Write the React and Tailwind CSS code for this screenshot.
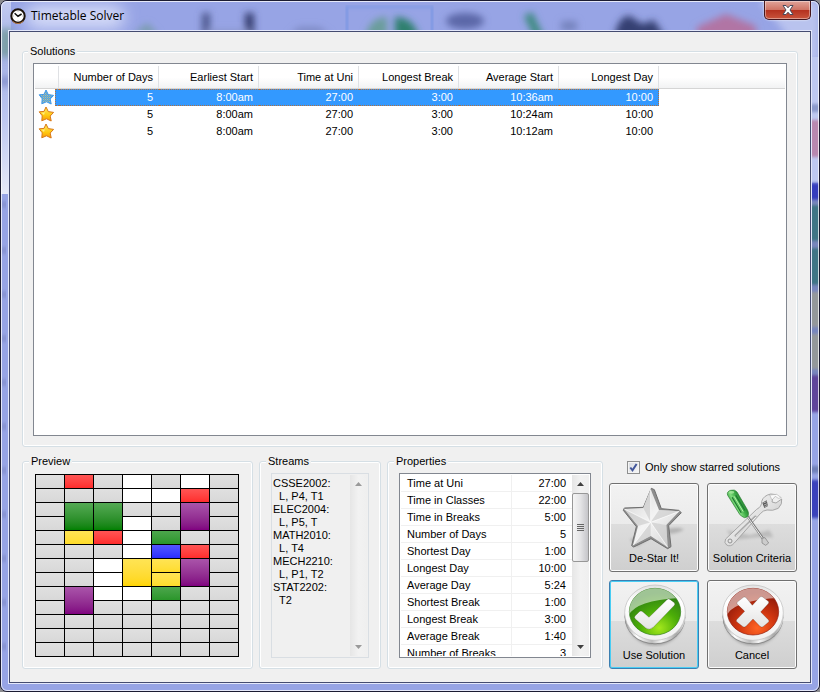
import React, { useState } from "react";

const solutionColumns = ["Number of Days", "Earliest Start", "Time at Uni", "Longest Break", "Average Start", "Longest Day"];

const solutions = [
  ["5", "8:00am", "27:00", "3:00", "10:36am", "10:00"],
  ["5", "8:00am", "27:00", "3:00", "10:24am", "10:00"],
  ["5", "8:00am", "27:00", "3:00", "10:12am", "10:00"],
];

const properties = [
  ["Time at Uni", "27:00"],
  ["Time in Classes", "22:00"],
  ["Time in Breaks", "5:00"],
  ["Number of Days", "5"],
  ["Shortest Day", "1:00"],
  ["Longest Day", "10:00"],
  ["Average Day", "5:24"],
  ["Shortest Break", "1:00"],
  ["Longest Break", "3:00"],
  ["Average Break", "1:40"],
  ["Number of Breaks", "3"],
];

const streams = `CSSE2002:
  L, P4, T1
ELEC2004:
  L, P5, T
MATH2010:
  L, T4
MECH2210:
  L, P1, T2
STAT2202:
  T2`;

/* One string per half-hour slot; lower case = one slot, upper case = two slots, "^" = covered from above. */
const timetable = [
  ".r.w.w.",
  "...wwr.",
  ".GG..P.",
  ".^^w.^.",
  ".yrwg..",
  "...wbr.",
  "..wYyP.",
  "..w^y^.",
  ".Pwwg..",
  ".^.....",
  ".......",
  ".......",
  ".......",
];

const cellStyles = {
  ".": "bg-linear-to-b from-[#e0e0e0] to-[#d8d8d8]",
  w: "bg-white",
  r: "bg-linear-to-b from-[#ff5454] to-[#ff2c2c]",
  g: "bg-linear-to-b from-[#4ca64c] to-[#2a962a]",
  y: "bg-linear-to-b from-[#ffe454] to-[#ffdc2a]",
  b: "bg-linear-to-b from-[#5454ff] to-[#2c2cff]",
  G: "row-span-2 bg-linear-to-b from-[#54aa54] to-[#008000]",
  Y: "row-span-2 bg-linear-to-b from-[#ffe454] to-[#ffd600]",
  P: "row-span-2 bg-linear-to-b from-[#aa54aa] to-[#800080]",
};

function Group({ title, className = "px-[11px]", children }) {
  return (
    <fieldset className={`flex min-w-0 flex-col rounded-[3px] border border-[#d5dfe5] pb-2.5 pt-[5px] shadow-[inset_0_0_0_1px_#fff] ${className}`}>
      <legend className="-ml-[5px] bg-[#f0f0f0] px-0.5 leading-[14px]">{title}</legend>
      {children}
    </fieldset>
  );
}

function GoldStar({ selected }) {
  return (
    <svg className="block h-4 w-5" viewBox="0 0 20 16">
      <defs>
        <linearGradient id="gold" x1="0" y1="0" x2="0" y2="1">
          <stop offset="0" stopColor="#ffe860" />
          <stop offset=".6" stopColor="#ffc810" />
          <stop offset="1" stopColor="#f89808" />
        </linearGradient>
        <pattern id="dither" width="2" height="2" patternUnits="userSpaceOnUse">
          <rect width="2" height="2" fill="#4aa2ec" />
          <rect width="1" height="1" fill="#c4c088" />
          <rect x="1" y="1" width="1" height="1" fill="#88b4b4" />
        </pattern>
      </defs>
      <path
        d="M11 1 L13.3 5.6 L18.6 6.4 L15.2 10 L16.2 15 L11.5 12.8 L6.8 14.8 L7.2 9.8 L4.2 5.8 L9 5.4 Z"
        fill={selected ? "url(#dither)" : "url(#gold)"}
        stroke={selected ? "#3f98ea" : "#d87818"}
        strokeWidth="1"
        strokeLinejoin="round"
      />
      {!selected && <path d="M10.8 3.5 L9.6 6.6 L6.5 6.8 L9 9 Z" fill="#fff6a0" opacity=".8" />}
    </svg>
  );
}

function ClockIcon() {
  return (
    <svg className="h-4 w-4 shrink-0" viewBox="0 0 16 16">
      <circle cx="8" cy="8" r="6.7" fill="#fff" stroke="#1c130c" strokeWidth="2" />
      <path d="M2.6 13.2 A7.4 7.4 0 0 0 13.4 13.2" fill="none" stroke="#b8783c" strokeWidth="1" />
      <path d="M4.6 5.2 L8 8.2 L11.6 6" fill="none" stroke="#111" strokeWidth="1.5" />
      <path d="M8 2.7v.8M8 12.5v.8M2.8 8h.8M12.4 8h.8" stroke="#777" strokeWidth=".8" />
    </svg>
  );
}

/* Blurred desktop seen through the translucent window frame. */
function GlassBackdrop() {
  return (
    <svg className="pointer-events-none absolute inset-0 h-full w-full" aria-hidden="true">
      <defs>
        <filter id="soft" x="-30%" y="-30%" width="160%" height="160%">
          <feGaussianBlur stdDeviation="3.5" />
        </filter>
        <filter id="softer" x="-30%" y="-80%" width="160%" height="260%">
          <feGaussianBlur stdDeviation="8" />
        </filter>
        <filter id="edge" x="-50%" y="-5%" width="200%" height="110%">
          <feGaussianBlur stdDeviation="0 1.5" />
        </filter>
        <linearGradient id="leftTop" x1="0" y1="0" x2="0" y2="1">
          <stop offset="0" stopColor="#c4ccf2" />
          <stop offset=".25" stopColor="#a4b0e4" />
          <stop offset=".6" stopColor="#bcc6ef" />
          <stop offset="1" stopColor="#e6e9f8" />
        </linearGradient>
      </defs>
      <rect width="100%" height="100%" fill="#97a4e5" />
      <rect width="10" height="193" fill="url(#leftTop)" />
      <g filter="url(#soft)">
        <rect x="-2" y="28" width="14" height="28" fill="#7d9fa8" />
        <rect x="-2" y="76" width="12" height="9" fill="#8490cc" />
        <path d="M132 34 l14 -12 l12 12z" fill="#7a9cae" />
        <rect x="201" y="12" width="8" height="24" fill="#4e588e" />
        <rect x="244" y="12" width="9" height="24" fill="#343e70" />
        <rect x="205" y="29" width="44" height="10" fill="#8994cb" />
        <path d="M288 34 l10 -8 h20 l12 8z" fill="#7e8ac4" />
        <path d="M364 38 q4 -22 22 -22 v22z" fill="#6a9d9b" />
        <path d="M394 38 v-22 q20 0 24 22z" fill="#2f806e" />
        <ellipse cx="464" cy="20" rx="19" ry="8" fill="#5c68a8" />
        <path d="M527 13 L539 38" stroke="#3c8a80" strokeWidth="9" />
        <rect x="560" y="20" width="16" height="10" fill="#7683be" />
        <path d="M613 38 q4 -24 16 -23 l12 8 l12 -4 l12 19z" fill="#343f72" />
        <path d="M696 38 v-12 l29 -13 l30 12 v13z" fill="#b174a4" />
      </g>
      <rect x="346" y="6" width="85" height="40" fill="none" stroke="#7896e4" strokeWidth="3" opacity=".6" filter="url(#edge)" />
      <rect x="24" y="4" width="100" height="24" rx="12" fill="#e0e5fb" opacity=".85" filter="url(#softer)" />
      <g filter="url(#edge)">
        {[200, 246, 290, 334, 378, 422, 466, 510, 554, 598, 642].map((y) => (
          <rect key={y} x="1" y={y} width="4" height="7" fill="#8995d4" />
        ))}
      </g>
      <svg x="100%" overflow="visible">
        <path d="M-60 0 H0 V60 H-10 Z" fill="#c2cbf1" opacity=".8" filter="url(#soft)" />
        <rect x="-10" y="56" width="10" height="126" fill="#bec8f0" />
        <g filter="url(#edge)">
          <rect x="-10" y="103" width="10" height="8" fill="#8c9acb" />
          <rect x="-10" y="119" width="10" height="37" fill="#b888b0" />
          <rect x="-10" y="182" width="10" height="17" fill="#343dbd" />
          <rect x="-10" y="199" width="10" height="180" fill="#7886bd" />
          <rect x="-10" y="204" width="10" height="36" fill="#3f7586" />
          <rect x="-10" y="247" width="10" height="37" fill="#3f7586" />
          <rect x="-10" y="291" width="10" height="35" fill="#94989b" />
          <rect x="-10" y="333" width="10" height="35" fill="#94989b" />
          <rect x="-10" y="374" width="10" height="37" fill="#5e449b" />
          <rect x="-10" y="465" width="10" height="7" fill="#7080b8" />
          <rect x="-10" y="479" width="10" height="38" fill="#3b43bc" />
        </g>
      </svg>
    </svg>
  );
}

function SilverStarIcon() {
  return (
    <svg className="h-[65px] w-20" viewBox="42 105 240 195">
      <defs>
        <linearGradient id="silver" x1="0" y1="0" x2="1" y2="1">
          <stop offset="0" stopColor="#d2d2d2" />
          <stop offset=".5" stopColor="#f4f4f4" />
          <stop offset="1" stopColor="#cfcfcf" />
        </linearGradient>
        <filter id="iconShadow" x="-20%" y="-60%" width="140%" height="220%">
          <feGaussianBlur stdDeviation="4" />
        </filter>
      </defs>
      <path d="M190 240 Q235 228 252 238 Q240 250 200 252Z M90 268 Q120 255 150 264 L110 290Z" fill="#777" opacity=".4" filter="url(#iconShadow)" />
      <path d="M154 115 L163 119 L184 176 L236 181 L244 188 L206 227 L213 290 L203 296 L153 266 L101 291 L95 287 L109 230 L70 181 L73 174 L130 172 Z" fill="#8e8e8e" stroke="#6f6f6f" strokeWidth="3" strokeLinejoin="round" />
      <path d="M152 118 L177 180 L238 184 L199 225 L203 292 L152 258 L99 286 L114 228 L73 177 L130 174 Z" fill="url(#silver)" />
      <path d="M152 118 L152 217 L130 174Z M238 184 L152 217 L177 180Z M203 292 L152 217 L199 225Z M99 286 L152 217 L152 258Z M73 177 L152 217 L114 228Z" fill="#c8c8c8" opacity=".6" />
      <path d="M152 118 L152 217 L238 184 M152 217 L203 292 M152 217 L99 286 M152 217 L73 177" fill="none" stroke="#fff" strokeWidth="2" />
    </svg>
  );
}

function ToolsIcon() {
  return (
    <svg className="h-[65px] w-20" viewBox="336 105 240 195">
      <defs>
        <linearGradient id="steel" x1="0" y1="0" x2="1" y2="1">
          <stop offset="0" stopColor="#fff" />
          <stop offset=".55" stopColor="#dedede" />
          <stop offset="1" stopColor="#9c9c9c" />
        </linearGradient>
        <linearGradient id="handle" gradientUnits="userSpaceOnUse" x1="392" y1="168" x2="430" y2="148">
          <stop offset="0" stopColor="#2a8c34" />
          <stop offset=".35" stopColor="#7fdc7c" />
          <stop offset=".65" stopColor="#3fae48" />
          <stop offset="1" stopColor="#207c2c" />
        </linearGradient>
      </defs>
      <path d="M380 240 L450 256 L508 240 L520 262 L470 262 L400 270Z" fill="#777" opacity=".3" filter="url(#iconShadow)" />
      <path d="M377 267 L470 178 Q486 170 485 154 Q490 137 512 132 L529 134 L518 146 L516 156 L528 159 L545 147 Q548 162 535 175 Q518 184 501 180 Q489 181 481 191 L403 279 Q392 292 380 285 Q371 278 377 267Z" fill="url(#steel)" stroke="#9a9a9a" strokeWidth="2.5" strokeLinejoin="round" />
      <path d="M407 257 L466 200" stroke="#a9a9a9" strokeWidth="7" strokeLinecap="round" />
      <path d="M408 259 L467 202" stroke="#f4f4f4" strokeWidth="3" strokeLinecap="round" />
      <circle cx="390" cy="273" r="6" fill="#e5e5e5" stroke="#909090" strokeWidth="3" />
      <path d="M487 158 L500 151 L504 168 L493 174Z" fill="#555" />
      <path d="M490 159 l10 -4 M492 165 l10 -4 M494 170 l9 -4" stroke="#ddd" strokeWidth="2" />
      <path d="M509 135 L530 133 L544 143 L535 145 L526 139 L516 150Z" fill="#fafafa" stroke="#a0a0a0" strokeWidth="1.5" />
      <path d="M441 197 L491 269" stroke="#777" strokeWidth="7" />
      <path d="M440 197 L490 268" stroke="#eee" strokeWidth="3" />
      <path d="M486 265 L495 263 L506 279 L497 286 L486 279Z" fill="#ccc" stroke="#7b7b7b" strokeWidth="2" />
      <path d="M383 136 Q379 125 392 121 Q404 117 411 126 L442 179 Q449 193 442 200 Q434 207 424 198 Q418 193 414 185Z" fill="url(#handle)" stroke="#237a2c" strokeWidth="2" />
      <path d="M397 143 L423 187 M408 137 L434 180" stroke="#1e7830" strokeWidth="3.5" strokeLinecap="round" />
      <path d="M403 140 L429 184" stroke="#b5f0a8" strokeWidth="3" strokeLinecap="round" />
      <ellipse cx="395" cy="127" rx="8" ry="4" fill="#b5f0a8" opacity=".7" />
    </svg>
  );
}

function RoundBadge({ id, dark, mid, bright, children }) {
  return (
    <svg className="h-[65px] w-20" viewBox="42 36 240 195">
      <defs>
        <linearGradient id={`${id}Rim`} x1="0" y1="0" x2="1" y2="0">
          <stop offset="0" stopColor="#8d8d8d" />
          <stop offset=".2" stopColor="#fff" />
          <stop offset=".45" stopColor="#bdbdbd" />
          <stop offset=".6" stopColor="#f6f6f6" />
          <stop offset=".85" stopColor="#a8a8a8" />
          <stop offset="1" stopColor="#dedede" />
        </linearGradient>
        <linearGradient id={`${id}Ring`} x1="0" y1="0" x2="0" y2="1">
          <stop offset="0" stopColor="#e2e2e2" />
          <stop offset=".3" stopColor="#fff" />
          <stop offset="1" stopColor="#f0f0f0" />
        </linearGradient>
        <radialGradient id={`${id}Face`} cx=".58" cy=".85" r=".75">
          <stop offset="0" stopColor={bright} />
          <stop offset=".5" stopColor={mid} />
          <stop offset="1" stopColor={dark} />
        </radialGradient>
        <linearGradient id={`${id}Mark`} x1="0" y1="0" x2="0" y2="1">
          <stop offset="0" stopColor="#fff" />
          <stop offset="1" stopColor="#e4e4e4" />
        </linearGradient>
        <clipPath id={`${id}Clip`}>
          <ellipse cx="165" cy="125" rx="77" ry="70" />
        </clipPath>
      </defs>
      <ellipse cx="165" cy="150" rx="84" ry="76" fill="#666" opacity=".5" filter="url(#iconShadow)" />
      <ellipse cx="165" cy="142" rx="91" ry="81" fill="#8a8a8a" />
      <ellipse cx="165" cy="139" rx="91" ry="81" fill={`url(#${id}Rim)`} />
      <ellipse cx="165" cy="128" rx="91" ry="83" fill={`url(#${id}Ring)`} stroke="#bbb" strokeWidth="2" />
      <ellipse cx="165" cy="125" rx="77" ry="70" fill={`url(#${id}Face)`} stroke={dark} strokeWidth="2" />
      <path d="M85 140 Q100 92 238 84 L238 50 L85 50Z" fill="#fff" opacity=".55" clipPath={`url(#${id}Clip)`} />
      <g fill={`url(#${id}Mark)`} stroke="#000" strokeOpacity=".22" strokeWidth="2.5" strokeLinejoin="round">
        {children}
      </g>
    </svg>
  );
}

function IconButton({ label, primary, children }) {
  const edge = primary
    ? "border-[#3c7fb1] shadow-[inset_0_0_0_1px_#48cdf4]"
    : "border-[#707070] shadow-[inset_0_0_0_1px_#fcfcfc]";
  return (
    <button
      type="button"
      className={`flex h-[89px] flex-col items-center rounded-[3px] border bg-[linear-gradient(#f2f2f2,#ebebeb_46%,#dddddd_46%,#cfcfcf)] pt-px ${edge}`}
    >
      {children}
      <span className="leading-4">{label}</span>
    </button>
  );
}

function Arrow({ up, faded }) {
  return (
    <svg className="h-1 w-[7px]" viewBox="0 0 7 4">
      <path d={up ? "M0 4 L3.5 0 L7 4Z" : "M0 0 L3.5 4 L7 0Z"} fill={faded ? "#9a9a9a" : "#404040"} />
    </svg>
  );
}

function ScrollBar({ disabled }) {
  return (
    <div className="flex w-[17px] shrink-0 flex-col bg-linear-to-r from-[#e6e6e6] via-[#f2f2f2] to-[#efefef]">
      <button type="button" aria-label="Scroll up" disabled={disabled} className="flex h-[18px] items-center justify-center">
        <Arrow up faded={disabled} />
      </button>
      <div className="flex-1">
        {!disabled && (
          <div className="flex h-[69px] flex-col items-center justify-center gap-px rounded-[2px] border border-[#979797] bg-linear-to-r from-[#f5f5f5] via-[#e4e4e6] to-[#c5c5c9]">
            {[0, 1, 2, 3].map((n) => (
              <span key={n} className="h-px w-[7px] bg-[#666]" />
            ))}
          </div>
        )}
      </div>
      <button type="button" aria-label="Scroll down" disabled={disabled} className="flex h-[18px] items-center justify-center">
        <Arrow faded={disabled} />
      </button>
    </div>
  );
}

function TitleBar() {
  return (
    <header className="relative flex h-[29px] items-start justify-between pl-[9px]">
      <div className="flex h-full items-center gap-[5px] font-['Open_Sans','Noto_Sans',sans-serif] text-[12px] leading-4">
        <ClockIcon />
        <h1>Timetable Solver</h1>
      </div>
      <button
        type="button"
        aria-label="Close"
        className="mr-2 flex h-[19px] w-[47px] items-center justify-center rounded-b-[5px] border border-t-0 border-[#46161c] bg-[linear-gradient(#e0a49a,#cf7465_48%,#b4301e_50%,#c9543c)] shadow-[inset_0_0_0_1px_rgba(255,255,255,0.4),0_0_2px_#fff]"
      >
        <svg className="h-3 w-3" viewBox="0 0 12 12">
          <path d="M1 1.5 H4 L6 3.8 L8 1.5 H11 L8 6 L11 10.5 H8 L6 8.2 L4 10.5 H1 L4 6Z" fill="#fff" stroke="#4a4a5c" strokeWidth="1" strokeLinejoin="round" />
        </svg>
      </button>
    </header>
  );
}

function SolutionsTable() {
  return (
    <div className="flex-1 border border-[#828790] bg-white px-px pt-0.5">
      <table className="w-full table-fixed border-separate border-spacing-0 text-right">
        <thead>
          <tr className="bg-linear-to-b from-white from-50% to-[#f0f1f2]">
            <th className="h-[23px] w-6 border-b border-r border-b-[#d5d5d5] border-r-[#dfe1e4] p-0" aria-label="Starred" />
            {solutionColumns.map((c) => (
              <th key={c} scope="col" className="w-[100px] border-b border-r border-b-[#d5d5d5] border-r-[#dfe1e4] py-0 pl-0 pr-[5px] font-normal">
                {c}
              </th>
            ))}
            <th className="border-b border-b-[#d5d5d5] p-0" aria-hidden="true" />
          </tr>
        </thead>
        <tbody>
          {solutions.map((row, i) => {
            const selected = i === 0;
            return (
              <tr key={row[4]} aria-selected={selected}>
                <td className="p-0">
                  <div className="flex h-[17px]">
                    <GoldStar selected={selected} />
                    {selected && <span className="flex-1 border-y border-l border-dotted border-[#b07040] bg-[#3399ff]" />}
                  </div>
                </td>
                {row.map((value, n) => (
                  <td
                    key={n}
                    className={
                      selected
                        ? "h-[17px] border-y border-dotted border-[#b07040] bg-[#3399ff] py-0 pl-0 pr-1.5 leading-[15px] text-white nth-7:border-r nth-7:pr-[5px]"
                        : "h-[17px] py-0 pl-0 pr-1.5 leading-[17px]"
                    }
                  >
                    {value}
                  </td>
                ))}
                <td className="p-0" />
              </tr>
            );
          })}
        </tbody>
      </table>
    </div>
  );
}

export default function App() {
  const [starredOnly, setStarredOnly] = useState(true);
  return (
    <div className="bg-[#8c8c90] font-['Liberation_Sans',Arial,sans-serif] text-[11px] leading-[13px] text-black">
      <div className="relative flex h-screen min-h-[480px] flex-col overflow-hidden rounded-[7px] border border-[#1b1b32]">
        <GlassBackdrop />
        <div className="pointer-events-none absolute inset-0 rounded-[6px] border border-white/75" />
        <TitleBar />
        <main className="relative mx-[7px] mb-[7px] flex flex-1 flex-col border border-[#e4e8fb]">
          <div className="flex flex-1 flex-col gap-[7px] border border-[#454c70] bg-[#f0f0f0] px-3 pb-[13px] pt-3">
            <Group title="Solutions" className="flex-1 px-2.5">
              <SolutionsTable />
            </Group>

            <div className="grid grid-cols-[231fr_122fr_216fr_189px] gap-1.5">
              <Group title="Preview">
                <div className="ml-px mr-0.5 mt-px grid grid-cols-7 grid-rows-[repeat(13,13px)] gap-px border border-black bg-black">
                  {timetable.map((slots, r) =>
                    slots.split("").map((kind, c) => (kind === "^" ? null : <div key={`${r}-${c}`} className={cellStyles[kind]} />))
                  )}
                </div>
              </Group>

              <Group title="Streams">
                <div className="flex h-[185px] border border-[#d9dee3] p-px">
                  <textarea
                    readOnly
                    aria-label="Streams"
                    value={streams}
                    className="block w-0 flex-1 resize-none overflow-hidden whitespace-pre bg-transparent pt-0.5 outline-none"
                  />
                  <ScrollBar disabled />
                </div>
              </Group>

              <Group title="Properties">
                <div className="flex h-[185px] border border-[#828790] bg-white p-px">
                  <div className="flex-1 overflow-hidden">
                    <table className="w-full border-separate border-spacing-0">
                      <tbody>
                        {properties.map(([name, value]) => (
                          <tr key={name}>
                            <th scope="row" className="w-[111px] border-b border-r border-[#f0f0f0] py-0 pl-1.5 pr-0 text-left font-normal leading-4">
                              {name}
                            </th>
                            <td className="border-b border-[#f0f0f0] py-0 pl-0 pr-1.5 text-right leading-4">{value}</td>
                          </tr>
                        ))}
                      </tbody>
                    </table>
                  </div>
                  <ScrollBar />
                </div>
              </Group>

              <div className="flex flex-col gap-2 pr-px pt-[5px]">
                <label className="flex h-4 items-center gap-[5px] pl-[18px]">
                  <span className="grid h-[13px] w-[13px] shrink-0">
                    <input
                      type="checkbox"
                      checked={starredOnly}
                      onChange={(e) => setStarredOnly(e.target.checked)}
                      className="peer col-start-1 row-start-1 h-[13px] w-[13px] appearance-none border border-[#8e8f8f] bg-linear-to-br from-[#d6dae0] to-[#f8f8f8] shadow-[inset_0_0_0_1px_#f4f4f4]"
                    />
                    <svg className="pointer-events-none invisible col-start-1 row-start-1 h-[13px] w-[13px] peer-checked:visible" viewBox="0 0 13 13">
                      <path d="M3.3 6.5 L5.5 9.3 L9.6 3" fill="none" stroke="#42569a" strokeWidth="2" />
                    </svg>
                  </span>
                  Only show starred solutions
                </label>
                <div className="grid grid-cols-2 gap-2">
                  <IconButton label="De-Star It!">
                    <SilverStarIcon />
                  </IconButton>
                  <IconButton label="Solution Criteria">
                    <ToolsIcon />
                  </IconButton>
                  <IconButton label="Use Solution" primary>
                    <RoundBadge id="accept" dark="#2c7c14" mid="#4cae08" bright="#a4e81c">
                      <path d="M105 138 L118 125 Q123 121 129 126 L147 142 L200 90 Q205 84 211 89 L223 98 Q227 102 222 107 L160 172 Q148 182 137 174 L106 147 Q101 142 105 138Z" />
                    </RoundBadge>
                  </IconButton>
                  <IconButton label="Cancel">
                    <RoundBadge id="cancel" dark="#8e1a0a" mid="#cf3510" bright="#ff6424">
                      <path d="M118 96 L136 82 Q141 79 145 84 L163 106 L185 82 Q189 78 194 81 L211 94 Q214 98 210 102 L188 126 L211 149 Q215 153 211 157 L195 170 Q190 173 186 169 L165 147 L144 169 Q140 173 135 170 L117 156 Q113 152 117 148 L140 124 L118 103 Q115 99 118 96Z" />
                    </RoundBadge>
                  </IconButton>
                </div>
              </div>
            </div>
          </div>
        </main>
      </div>
    </div>
  );
}
